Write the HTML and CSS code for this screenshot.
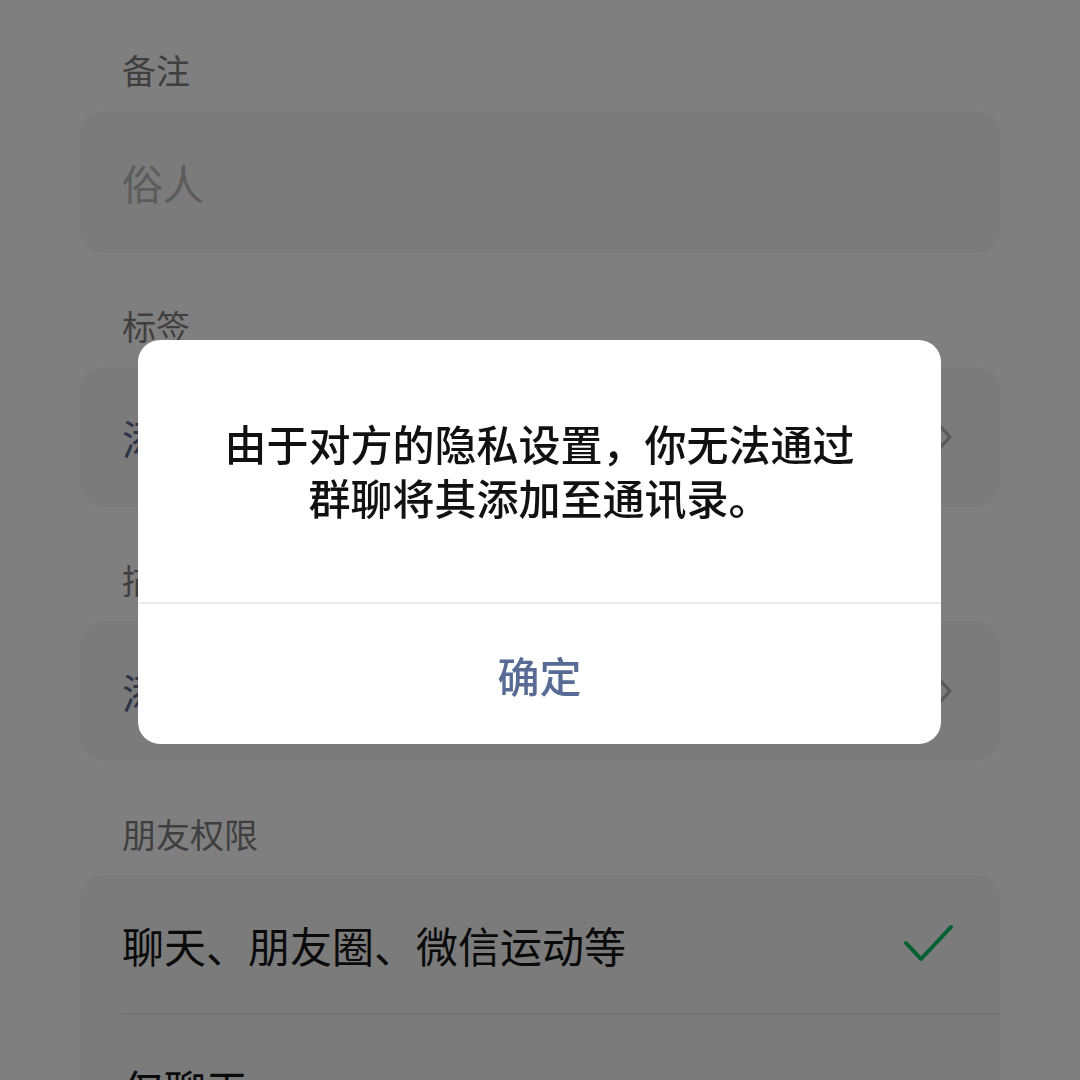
FILE: index.html
```html
<!DOCTYPE html>
<html lang="zh-CN">
<head>
<meta charset="utf-8">
<link rel="stylesheet" href="styles.css">
</head>
<body>
<div class="page">
  <section class="section">
    <div class="label">备注</div>
    <div class="card card-tall">
      <div class="row"><span class="placeholder">俗人</span></div>
    </div>
  </section>
  <section class="section">
    <div class="label">标签</div>
    <div class="card">
      <div class="row"><span class="link">添加标签</span>
        <svg class="chev" width="18" height="30" viewBox="0 0 18 30"><path d="M3 3 L14 15 L3 27" fill="none" stroke="#b2b2b2" stroke-width="3.2" stroke-linecap="round" stroke-linejoin="round"/></svg>
      </div>
    </div>
  </section>
  <section class="section">
    <div class="label">描述</div>
    <div class="card">
      <div class="row"><span class="link">添加描述</span>
        <svg class="chev" width="18" height="30" viewBox="0 0 18 30"><path d="M3 3 L14 15 L3 27" fill="none" stroke="#b2b2b2" stroke-width="3.2" stroke-linecap="round" stroke-linejoin="round"/></svg>
      </div>
    </div>
  </section>
  <section class="section">
    <div class="label">朋友权限</div>
    <div class="card card-list">
      <div class="row row-opt"><span class="text">聊天、朋友圈、微信运动等</span>
        <svg class="check" width="52" height="40" viewBox="0 0 52 40"><path d="M4 19 L19 35 L49 3" fill="none" stroke="#07c160" stroke-width="4" stroke-linecap="round" stroke-linejoin="round"/></svg>
      </div>
      <div class="row row-opt row-div"><span class="text">仅聊天</span></div>
    </div>
  </section>
</div>
<div class="overlay"></div>
<div class="dialog">
  <div class="dialog-body">由于对方的隐私设置，你无法通过<br>群聊将其添加至通讯录。</div>
  <div class="dialog-btn">确定</div>
</div>
</body>
</html>
```

FILE: styles.css
```css
* { box-sizing: border-box; }
html, body {
  margin: 0;
  padding: 0;
  width: 1080px;
  height: 1080px;
  overflow: hidden;
  background: #ffffff;
  font-family: "Noto Sans CJK SC", "Noto Sans", sans-serif;
}
.page {
  padding: 48px 80px 0 80px;
  display: flex;
  flex-direction: column;
  gap: 51px;
}
.section {
  display: flex;
  flex-direction: column;
  gap: 19px;
}
.label {
  padding-left: 42px;
  font-size: 34px;
  line-height: 44px;
  height: 44px;
  color: #7f7f7f;
}
.card {
  background: #f6f6f6;
  border-radius: 24px;
}
.row {
  height: 140px;
  padding: 0 46px 0 42px;
  display: flex;
  align-items: center;
  justify-content: space-between;
}
.card-tall .row { height: 142px; }
.placeholder {
  font-size: 41px;
  color: #b8b8b8;
}
.link {
  font-size: 41px;
  color: #576b95;
}
.text {
  font-size: 42px;
  color: #151515;
}
.card-list { height: 400px; }
.row-opt { height: 138px; }
.row-div {
  margin-left: 42px;
  padding-left: 0;
  border-top: 2px solid #e6e6e6;
  align-items: flex-start;
  padding-top: 42px;
}
.overlay {
  position: fixed;
  inset: 0;
  background: rgba(0, 0, 0, 0.5);
}
.dialog {
  position: fixed;
  left: 138px;
  top: 340px;
  width: 803px;
  height: 404px;
  background: #ffffff;
  border-radius: 22px;
  display: flex;
  flex-direction: column;
  overflow: hidden;
}
.dialog-body {
  height: 264px;
  padding-top: 76px;
  text-align: center;
  font-size: 42px;
  line-height: 54px;
  font-weight: 500;
  color: #111111;
  border-bottom: 2px solid #ebebeb;
}
.dialog-btn {
  flex: 1;
  display: flex;
  align-items: center;
  justify-content: center;
  font-size: 42px;
  font-weight: 500;
  color: #576b95;
}
```
